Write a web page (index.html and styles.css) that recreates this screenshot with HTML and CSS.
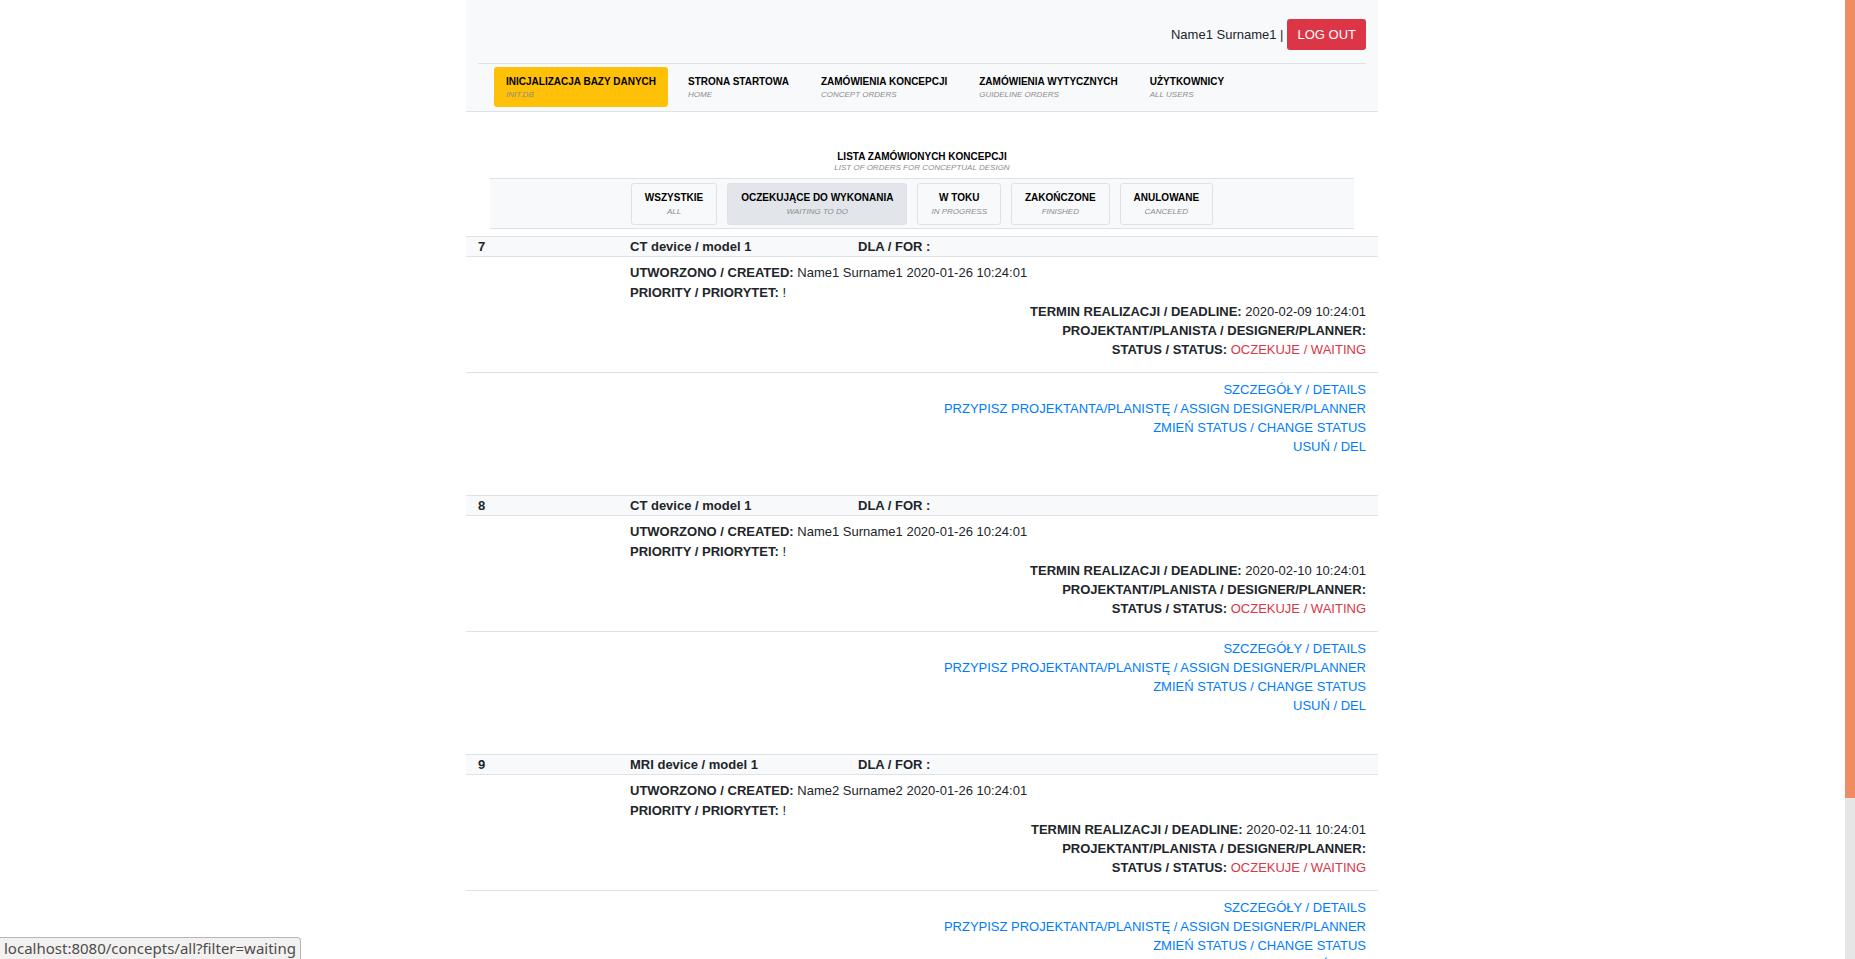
FILE: index.html
```html
<!DOCTYPE html>
<html lang="pl">
<head>
<meta charset="utf-8">
<title>Lista zamówionych koncepcji</title>
<link rel="stylesheet" href="styles.css">
</head>
<body>
<div class="window">
  <div class="page">
    <div class="container">
      <header class="header">
        <div class="account">
          <span>Name1 Surname1 |</span>
          <button class="logout" type="button">LOG OUT</button>
        </div>
        <nav class="nav">
          <a class="nav-item nav-item-warning" href="#"><b class="label">INICJALIZACJA BAZY DANYCH</b><i class="sub">INIT.DB</i></a>
          <a class="nav-item" href="#"><b class="label">STRONA STARTOWA</b><i class="sub">HOME</i></a>
          <a class="nav-item" href="#"><b class="label">ZAMÓWIENIA KONCEPCJI</b><i class="sub">CONCEPT ORDERS</i></a>
          <a class="nav-item" href="#"><b class="label">ZAMÓWIENIA WYTYCZNYCH</b><i class="sub">GUIDELINE ORDERS</i></a>
          <a class="nav-item" href="#"><b class="label">UŻYTKOWNICY</b><i class="sub">ALL USERS</i></a>
        </nav>
      </header>
      <main>
        <h1 class="title"><b class="label">LISTA ZAMÓWIONYCH KONCEPCJI</b><i class="sub">LIST OF ORDERS FOR CONCEPTUAL DESIGN</i></h1>
        <div class="filters">
          <a class="filter" href="#"><b class="label">WSZYSTKIE</b><i class="sub">ALL</i></a>
          <a class="filter filter-active" href="#"><b class="label">OCZEKUJĄCE DO WYKONANIA</b><i class="sub">WAITING TO DO</i></a>
          <a class="filter" href="#"><b class="label">W TOKU</b><i class="sub">IN PROGRESS</i></a>
          <a class="filter" href="#"><b class="label">ZAKOŃCZONE</b><i class="sub">FINISHED</i></a>
          <a class="filter" href="#"><b class="label">ANULOWANE</b><i class="sub">CANCELED</i></a>
        </div>

        <section class="order">
          <h2 class="order-head"><span class="order-id">7</span><span class="order-name">CT device / model 1</span><span>DLA / FOR :</span></h2>
          <div class="order-body">
            <div class="created"><p><b>UTWORZONO / CREATED:</b> Name1 Surname1 2020-01-26 10:24:01</p><p><b>PRIORITY / PRIORYTET:</b> !</p></div>
            <div class="right"><p><b>TERMIN REALIZACJI / DEADLINE:</b> 2020-02-09 10:24:01</p><p><b>PROJEKTANT/PLANISTA / DESIGNER/PLANNER:</b></p><p><b>STATUS / STATUS:</b> <span class="waiting">OCZEKUJE / WAITING</span></p></div>
          </div>
          <div class="actions"><a href="#">SZCZEGÓŁY / DETAILS</a><a href="#">PRZYPISZ PROJEKTANTA/PLANISTĘ / ASSIGN DESIGNER/PLANNER</a><a href="#">ZMIEŃ STATUS / CHANGE STATUS</a><a href="#">USUŃ / DEL</a></div>
        </section>

        <section class="order">
          <h2 class="order-head"><span class="order-id">8</span><span class="order-name">CT device / model 1</span><span>DLA / FOR :</span></h2>
          <div class="order-body">
            <div class="created"><p><b>UTWORZONO / CREATED:</b> Name1 Surname1 2020-01-26 10:24:01</p><p><b>PRIORITY / PRIORYTET:</b> !</p></div>
            <div class="right"><p><b>TERMIN REALIZACJI / DEADLINE:</b> 2020-02-10 10:24:01</p><p><b>PROJEKTANT/PLANISTA / DESIGNER/PLANNER:</b></p><p><b>STATUS / STATUS:</b> <span class="waiting">OCZEKUJE / WAITING</span></p></div>
          </div>
          <div class="actions"><a href="#">SZCZEGÓŁY / DETAILS</a><a href="#">PRZYPISZ PROJEKTANTA/PLANISTĘ / ASSIGN DESIGNER/PLANNER</a><a href="#">ZMIEŃ STATUS / CHANGE STATUS</a><a href="#">USUŃ / DEL</a></div>
        </section>

        <section class="order">
          <h2 class="order-head"><span class="order-id">9</span><span class="order-name">MRI device / model 1</span><span>DLA / FOR :</span></h2>
          <div class="order-body">
            <div class="created"><p><b>UTWORZONO / CREATED:</b> Name2 Surname2 2020-01-26 10:24:01</p><p><b>PRIORITY / PRIORYTET:</b> !</p></div>
            <div class="right"><p><b>TERMIN REALIZACJI / DEADLINE:</b> 2020-02-11 10:24:01</p><p><b>PROJEKTANT/PLANISTA / DESIGNER/PLANNER:</b></p><p><b>STATUS / STATUS:</b> <span class="waiting">OCZEKUJE / WAITING</span></p></div>
          </div>
          <div class="actions"><a href="#">SZCZEGÓŁY / DETAILS</a><a href="#">PRZYPISZ PROJEKTANTA/PLANISTĘ / ASSIGN DESIGNER/PLANNER</a><a href="#">ZMIEŃ STATUS / CHANGE STATUS</a><a href="#">USUŃ / DEL</a></div>
        </section>
      </main>
    </div>
  </div>
  <div class="scrollbar"><div class="thumb"></div></div>
  <div class="link-status">localhost:8080/concepts/all?filter=waiting</div>
</div>
</body>
</html>
```
FILE: styles.css
```css
* { box-sizing: border-box; }
body {
  margin: 0;
  background: #fff;
  color: #212529;
  font: 13px/19px "Liberation Sans", Arial, sans-serif;
}
p, h1, h2 { margin: 0; font-size: inherit; }
a { color: #007bff; text-decoration: none; }

.window {
  position: relative;
  display: flex;
  height: 100vh;
  overflow: hidden;
}
.page {
  flex: 1;
  padding-right: 1px;
  overflow: hidden;
}
.container {
  max-width: 912px;
  margin: 0 auto;
}

.scrollbar { width: 10px; background: #e6e6e6; }
.thumb { height: 83.2%; background: #f08c64; }

.link-status {
  position: absolute;
  left: 0;
  bottom: 0;
  padding: 0 4px;
  border: 1px solid #b9b7b5;
  border-width: 1px 1px 0 0;
  border-top-right-radius: 4px;
  background: #f2f1f0;
  color: #4c4c4c;
  font: 15px/21px "Noto Sans", sans-serif;
}

.header {
  padding: 0 12px;
  border-bottom: 1px solid #dee2e6;
  background: #f8f9fa;
}
.account {
  display: flex;
  justify-content: flex-end;
  align-items: center;
  gap: 4px;
  padding: 19px 0 13px;
  border-bottom: 1px solid #dee2e6;
}
.logout {
  padding: 6px 10px;
  border: 0;
  border-radius: 3px;
  background: #dc3545;
  color: #fff;
  font: inherit;
}

.label, .sub { display: block; }
.label { color: #000; font-size: 10px; line-height: 15px; }
.sub { color: #8c8c8c; font-size: 8px; line-height: 11px; font-weight: 400; }

.nav {
  display: flex;
  gap: 8px;
  padding: 3px 16px 4px;
}
.nav-item { padding: 7px 12px; border-radius: 3px; }
.nav-item-warning { background: #ffc107; }

.title {
  padding: 37px 0 6px;
  text-align: center;
}
.title .sub { line-height: 8px; }

.filters {
  display: flex;
  justify-content: center;
  gap: 10px;
  margin: 0 24px 7px;
  padding: 4px 0 3px;
  border: 1px solid #dee2e6;
  border-width: 1px 0;
  background: #f8f9fa;
}
.filter {
  padding: 6px 13px;
  border: 1px solid #dee2e6;
  border-radius: 3px;
  text-align: center;
}
.filter .sub { line-height: 13px; }
.filter-active { background: #e2e6ea; }

.order { margin-bottom: 39px; }
.order-head {
  display: grid;
  grid-template-columns: 2fr 3fr 7fr;
  border: 1px solid #dee2e6;
  border-width: 1px 0;
  background: #f8f9fa;
}
.order-head span { padding: 0 12px; }
.order-body {
  padding: 6px 12px 13px;
  border-bottom: 1px solid #dee2e6;
}
.created {
  display: grid;
  gap: 1px;
  margin-left: 152px;
}
.right { text-align: right; }
.waiting { color: #dc3545; }
.actions {
  display: flex;
  flex-direction: column;
  align-items: flex-end;
  padding: 7px 12px 0;
}
```
